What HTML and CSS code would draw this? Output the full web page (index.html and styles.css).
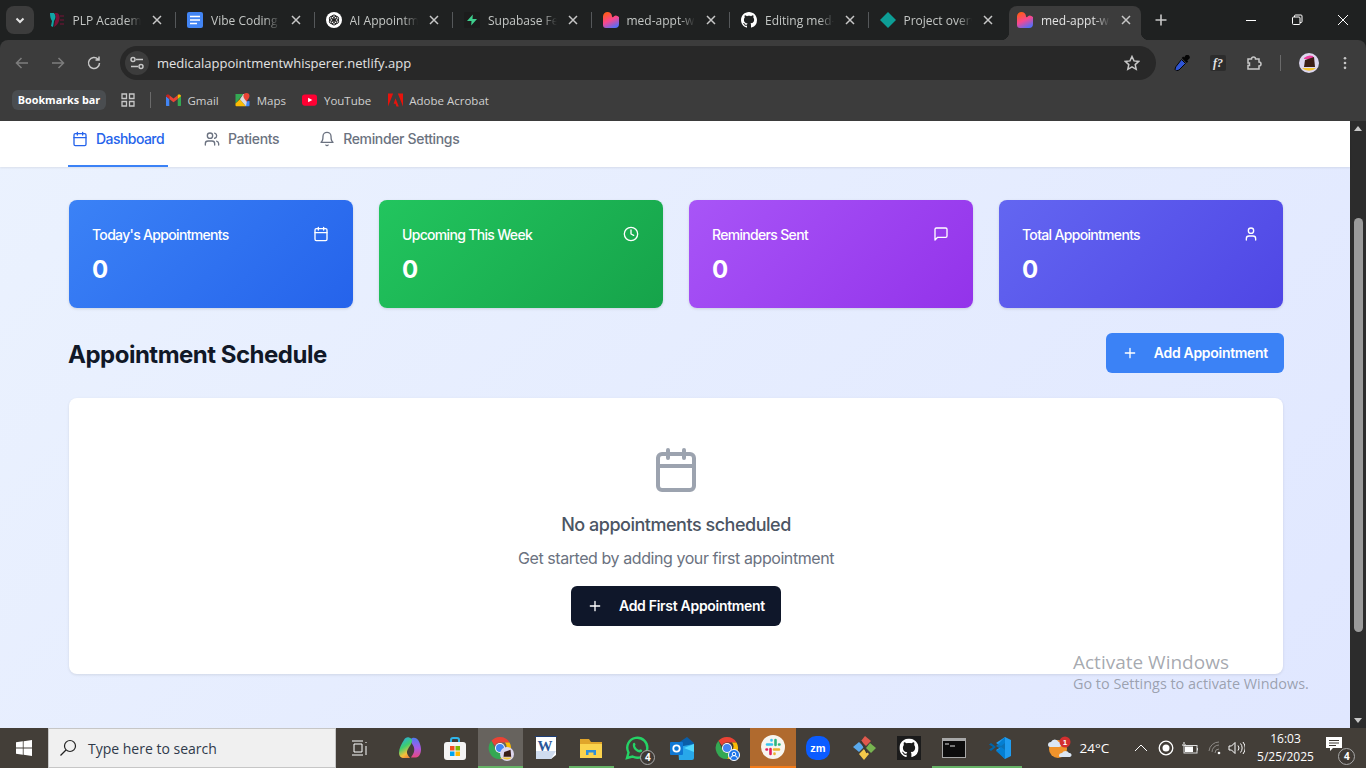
FILE: index.html
```html
<!DOCTYPE html>
<html lang="en">
<head>
<meta charset="UTF-8" />
<meta name="viewport" content="width=device-width, initial-scale=1" />
<title>Medical Appointment Whisperer</title>
<link rel="stylesheet" href="styles.css">
</head>
<body>

<svg class="defs" aria-hidden="true">
  <defs>
    <linearGradient id="heartFill" x1="0.1" y1="0" x2="0.6" y2="1">
      <stop offset="0.1" stop-color="#ff5a1f" />
      <stop offset="0.55" stop-color="#f8478f" />
      <stop offset="1" stop-color="#5a6cf5" />
    </linearGradient>
    <symbol id="i-calendar" viewBox="0 0 24 24"><rect x="3" y="4" width="18" height="18" rx="2" /><path d="M16 2v4M8 2v4M3 10h18" /></symbol>
    <symbol id="i-users" viewBox="0 0 24 24"><path d="M16 21v-2a4 4 0 0 0-4-4H6a4 4 0 0 0-4 4v2" /><circle cx="9" cy="7" r="4" /><path d="M22 21v-2a4 4 0 0 0-3-3.87M16 3.13a4 4 0 0 1 0 7.75" /></symbol>
    <symbol id="i-bell" viewBox="0 0 24 24"><path d="M6 8a6 6 0 0 1 12 0c0 7 3 9 3 9H3s3-2 3-9" /><path d="M10.3 21a1.94 1.94 0 0 0 3.4 0" /></symbol>
    <symbol id="i-clock" viewBox="0 0 24 24"><circle cx="12" cy="12" r="10" /><path d="M12 6v6l4 2" /></symbol>
    <symbol id="i-message" viewBox="0 0 24 24"><path d="M21 15a2 2 0 0 1-2 2H7l-4 4V5a2 2 0 0 1 2-2h14a2 2 0 0 1 2 2z" /></symbol>
    <symbol id="i-user" viewBox="0 0 24 24"><path d="M19 21v-2a4 4 0 0 0-4-4H9a4 4 0 0 0-4 4v2" /><circle cx="12" cy="7" r="4" /></symbol>
    <symbol id="i-plus" viewBox="0 0 24 24"><path d="M5 12h14M12 5v14" /></symbol>
    <symbol id="i-x" viewBox="0 0 14 14"><path d="M3 3l8 8M11 3l-8 8" /></symbol>
    <symbol id="i-heart" viewBox="0 0 16 16"><path fill="url(#heartFill)" d="M4.500 0A4.500 4.500 0 0 1 9 4.500c0 .5.4 1 1 .8A3.500 3.500 0 0 1 16 9v3a4 4 0 0 1-4 4H3a3 3 0 0 1-3-3V4.500A4.500 4.500 0 0 1 4.500 0z" /></symbol>
    <symbol id="i-github" viewBox="0 0 16 16"><path d="M8 0C3.58 0 0 3.58 0 8c0 3.54 2.290 6.530 5.470 7.590.4.07.55-.17.55-.38 0-.19-.01-.82-.01-1.490-2.010.37-2.530-.49-2.690-.94-.09-.23-.48-.94-.82-1.130-.28-.15-.68-.52-.01-.53.63-.01 1.080.58 1.230.82.72 1.210 1.870.87 2.330.66.07-.52.28-.87.51-1.070-1.780-.2-3.640-.89-3.640-3.950 0-.87.31-1.590.82-2.150-.08-.2-.36-1.020.08-2.120 0 0 .67-.21 2.200.82.64-.18 1.320-.27 2-.27s1.360.09 2 .27c1.530-1.040 2.200-.82 2.200-.82.44 1.100.16 1.920.08 2.120.51.56.82 1.270.82 2.150 0 3.070-1.870 3.750-3.650 3.950.29.25.54.73.54 1.480 0 1.070-.01 1.930-.01 2.200 0 .21.15.46.55.38A8.010 8.010 0 0 0 16 8c0-4.420-3.580-8-8-8z" /></symbol>
    <symbol id="i-chrome" viewBox="0 0 24 24">
      <path fill="#ea4335" d="M12 1a11 11 0 0 1 9.530 5.500H12a5.500 5.500 0 0 0-5 3.200L3.400 4.800A11 11 0 0 1 12 1z" />
      <path fill="#fbbc04" d="M21.530 6.500A11 11 0 0 1 12 23l4.700-8.300A5.500 5.500 0 0 0 16.800 6.500z" />
      <path fill="#34a853" d="M3.400 4.800L7.800 14.500a5.500 5.500 0 0 0 8.900.2L12 23A11 11 0 0 1 3.400 4.800z" />
      <circle cx="12" cy="12" r="5" fill="#fff" /><circle cx="12" cy="12" r="4" fill="#4285f4" />
    </symbol>
  </defs>
</svg>

<header class="chrome">
  <div class="tabstrip">
    <button class="tab-search"><svg width="12" height="12" viewBox="0 0 12 12" class="line"><path d="M2.500 4.500L6 8l3.500-3.500" /></svg></button>
    <div class="tab">
      <svg class="favicon" viewBox="0 0 16 16"><path fill="#11a5a5" d="M1 1h4c2 2 2 5 0 8l-1 6-2-1 1-5C1.500 7 1 4 1 1z" /><path fill="#7b1238" d="M5 1h3c3 1 3 5 2 8s-3 5-5 6l1-6c2-3 1-6-1-8z" /><path stroke="#7b1238" stroke-width="1.200" d="M11 4h4M11 8h4M11 12h4" /></svg>
      <span class="tab-title">PLP Academy</span>
      <svg class="tab-close line"><use href="#i-x" /></svg>
    </div>
    <div class="tab">
      <svg class="favicon" viewBox="0 0 16 16"><rect width="16" height="16" rx="2" fill="#4285f4" /><path stroke="#fff" stroke-width="1.700" d="M3 4.500h10M3 8h10M3 11.500h7" /></svg>
      <span class="tab-title">Vibe Coding</span>
      <svg class="tab-close line"><use href="#i-x" /></svg>
    </div>
    <div class="tab">
      <svg class="favicon" viewBox="0 0 16 16"><circle cx="8" cy="8" r="8" fill="#fff" /><g fill="none" stroke="#222" stroke-width="1"><circle cx="8" cy="5.500" r="2.500" /><circle cx="10.200" cy="6.800" r="2.500" /><circle cx="10.200" cy="9.200" r="2.500" /><circle cx="8" cy="10.500" r="2.500" /><circle cx="5.800" cy="9.200" r="2.500" /><circle cx="5.800" cy="6.800" r="2.500" /></g></svg>
      <span class="tab-title">AI Appointment</span>
      <svg class="tab-close line"><use href="#i-x" /></svg>
    </div>
    <div class="tab">
      <svg class="favicon" viewBox="0 0 16 16"><rect width="16" height="16" rx="1" fill="#1c1c1c" /><path fill="#3ecf8e" d="M8.800 2.500L3 9h4.500l-.3 4.500L13 7H8.500z" /></svg>
      <span class="tab-title">Supabase Features</span>
      <svg class="tab-close line"><use href="#i-x" /></svg>
    </div>
    <div class="tab">
      <svg class="favicon"><use href="#i-heart" /></svg>
      <span class="tab-title">med-appt-whisperer</span>
      <svg class="tab-close line"><use href="#i-x" /></svg>
    </div>
    <div class="tab">
      <svg class="favicon" fill="#fff"><use href="#i-github" /></svg>
      <span class="tab-title">Editing med-appt</span>
      <svg class="tab-close line"><use href="#i-x" /></svg>
    </div>
    <div class="tab no-sep">
      <svg class="favicon" viewBox="0 0 16 16"><path fill="#0d9e96" d="M8 0l8 8-8 8-8-8z" /></svg>
      <span class="tab-title">Project overview</span>
      <svg class="tab-close line"><use href="#i-x" /></svg>
    </div>
    <div class="tab active">
      <svg class="favicon"><use href="#i-heart" /></svg>
      <span class="tab-title">med-appt-whisperer</span>
      <svg class="tab-close line"><use href="#i-x" /></svg>
    </div>
    <svg class="new-tab line" viewBox="0 0 14 14"><path d="M7 1.500v11M1.500 7h11" /></svg>
    <div class="window-btns">
      <span class="window-btn"><svg width="12" height="12" viewBox="0 0 12 12" class="thin"><path d="M1 6.500h10" /></svg></span>
      <span class="window-btn"><svg width="12" height="12" viewBox="0 0 12 12" class="thin"><rect x="1.500" y="3" width="7.500" height="7.500" rx="1" /><path d="M3.500 3V2a1 1 0 0 1 1-1h5.500a1 1 0 0 1 1 1v5.500a1 1 0 0 1-1 1H9" /></svg></span>
      <span class="window-btn"><svg width="12" height="12" viewBox="0 0 12 12" class="thin"><path d="M1 1l10 10M11 1L1 11" /></svg></span>
    </div>
  </div>

  <div class="toolbar">
    <div class="nav-btns">
      <svg class="tool-icon dim" viewBox="0 0 16 16"><path d="M14 8H2.500M7.500 3l-5 5 5 5" /></svg>
      <svg class="tool-icon dim" viewBox="0 0 16 16"><path d="M2 8h11.500M8.500 3l5 5-5 5" /></svg>
      <svg class="tool-icon" viewBox="0 0 16 16"><path d="M13.500 8A5.500 5.500 0 1 1 12 4.200M13 1.500v3.500H9.500" /></svg>
    </div>
    <div class="omnibox">
      <span class="site-info"><svg width="14" height="14" viewBox="0 0 14 14" class="line"><path d="M6 3.500h7M1 10.500h7" /><circle cx="3" cy="3.500" r="2" /><circle cx="11" cy="10.500" r="2" /></svg></span>
      <span class="url">medicalappointmentwhisperer.netlify.app</span>
      <svg class="star line" viewBox="0 0 16 16"><path d="M8 1.500l2 4.400 4.800.5-3.600 3.200 1 4.700L8 11.900l-4.200 2.400 1-4.700L1.200 6.400 6 5.900z" /></svg>
    </div>
    <div class="extensions">
      <svg class="ext dropper" viewBox="0 0 16 16"><path fill="#050505" d="M11.500 0.500a2 2 0 0 1 3.500 3.500l-1.800 1.500 1 1-1.500 1.500-5-5 1.500-1.500 1 1z" /><path fill="#2f55d4" stroke="#050505" d="M7.500 4.500l4 4L5 15l-2.500.8-1.500-1.500.8-2.500z" /></svg>
      <span class="ext-font">f?</span>
      <svg class="ext line" viewBox="0 0 16 16"><path d="M2 4h3.500a2 2 0 0 1 4 0H13v3a2 2 0 0 1 0 4v3H2v-3.500h1.500V8H2z" /></svg>
      <span class="tool-sep"></span>
      <svg class="avatar" viewBox="0 0 20 20"><circle cx="10" cy="10" r="10" fill="#dcd6ee" /><path fill="#f4c430" d="M3 15h14a10 10 0 0 1-14 0z" /><path fill="#ee3fa0" d="M5 5a9 9 0 0 1 9-2l1 3H5z" /><path fill="#3a1d16" d="M5 14l1-7 9-3 1 10z" /></svg>
      <svg class="kebab" viewBox="0 0 4 16"><circle cx="2" cy="2.500" r="1.500" /><circle cx="2" cy="8" r="1.500" /><circle cx="2" cy="13.500" r="1.500" /></svg>
    </div>
  </div>

  <div class="bookmarks">
    <span class="bm-label">Bookmarks bar</span>
    <svg class="bm-apps" viewBox="0 0 14 14"><path d="M1 1h4.500v4.500H1zM8.500 1H13v4.500H8.500zM1 8.500h4.500V13H1zM8.500 8.500H13V13H8.500z" /></svg>
    <span class="bm-sep"></span>
    <span class="bm"><svg class="bm-icon" viewBox="0 0 16 14"><path fill="#4285f4" d="M0 3v9.500A1 1 0 0 0 1 13.500h2.500V6z" /><path fill="#34a853" d="M16 3v9.500a1 1 0 0 1-1 1h-2.500V6z" /><path fill="#ea4335" d="M3.500 6V2L8 5.500 12.500 2v4L8 9.500z" /><path fill="#c5221f" d="M0 3c0-2 2-2.500 3.500-1.500V6z" /><path fill="#fbbc04" d="M16 3c0-2-2-2.500-3.500-1.500V6z" /></svg>Gmail</span>
    <span class="bm"><svg class="bm-icon" viewBox="0 0 16 16"><path fill="#34a853" d="M0 1h9L0 12z" /><path fill="#fbbc04" d="M0 12l5-5 7 8H1a1 1 0 0 1-1-1z" /><path fill="#4285f4" d="M9 10l3 5h3a1 1 0 0 0 1-1V9z" /><path fill="#dcdcdc" d="M5 7L9 1h1l3 8-1 6z" /><path fill="#ea4335" d="M12.500 0A3.500 3.500 0 0 1 16 3.500C16 6 13.500 8 12.500 10 11.500 8 9 6 9 3.500A3.500 3.500 0 0 1 12.500 0z" /></svg>Maps</span>
    <span class="bm"><svg class="bm-icon" viewBox="0 0 16 12"><rect width="16" height="12" rx="3" fill="#ff0033" /><path fill="#fff" d="M6.500 3.500L11 6l-4.500 2.500z" /></svg>YouTube</span>
    <span class="bm"><svg class="bm-icon" viewBox="0 0 16 14"><path fill="#e8130c" d="M0 0h5.500L0 14zM16 0h-5.500L16 14zM8 5l3.500 9H9L8 11H6z" /></svg>Adobe Acrobat</span>
  </div>
</header>

<div class="viewport">
  <div class="page">
    <nav class="app-nav">
      <a class="nav-link current"><svg class="icon-16"><use href="#i-calendar" /></svg>Dashboard</a>
      <a class="nav-link"><svg class="icon-16"><use href="#i-users" /></svg>Patients</a>
      <a class="nav-link"><svg class="icon-16"><use href="#i-bell" /></svg>Reminder Settings</a>
    </nav>

    <main class="content">
      <section class="stats">
        <div class="stat blue">
          <div class="stat-top"><span>Today's Appointments</span><svg class="icon-16"><use href="#i-calendar" /></svg></div>
          <div class="stat-num">0</div>
        </div>
        <div class="stat green">
          <div class="stat-top"><span>Upcoming This Week</span><svg class="icon-16"><use href="#i-clock" /></svg></div>
          <div class="stat-num">0</div>
        </div>
        <div class="stat purple">
          <div class="stat-top"><span>Reminders Sent</span><svg class="icon-16"><use href="#i-message" /></svg></div>
          <div class="stat-num">0</div>
        </div>
        <div class="stat indigo">
          <div class="stat-top"><span>Total Appointments</span><svg class="icon-16"><use href="#i-user" /></svg></div>
          <div class="stat-num">0</div>
        </div>
      </section>

      <div class="schedule-head">
        <h2>Appointment Schedule</h2>
        <button class="btn btn-blue"><svg class="icon-16"><use href="#i-plus" /></svg>Add Appointment</button>
      </div>

      <section class="empty">
        <svg class="empty-icon"><use href="#i-calendar" /></svg>
        <h3>No appointments scheduled</h3>
        <p>Get started by adding your first appointment</p>
        <button class="btn btn-dark"><svg class="icon-16"><use href="#i-plus" /></svg>Add First Appointment</button>
      </section>
    </main>

    <div class="activate">
      <div class="activate-title">Activate Windows</div>
      <div class="activate-sub">Go to Settings to activate Windows.</div>
    </div>
  </div>

  <div class="scrollbar">
    <svg class="sb-arrow" viewBox="0 0 8 5"><path d="M4 0l4 5H0z" /></svg>
    <div class="sb-thumb"></div>
    <svg class="sb-arrow" viewBox="0 0 8 5"><path d="M4 5l4-5H0z" /></svg>
  </div>
</div>

<footer class="taskbar">
  <span class="start"><svg width="16" height="16" viewBox="0 0 16 16" fill="#fff"><path d="M0 2.300l6.800-1v6.300H0zM7.600 1.200L16 0v7.600H7.600zM0 8.400h6.800v6.300l-6.800-1zM7.600 8.400H16V16l-8.400-1.200z" /></svg></span>
  <div class="search">
    <svg width="18" height="18" viewBox="0 0 18 18" class="search-glass"><circle cx="11" cy="7" r="5.500" /><path d="M7 11l-5.500 5.500" /></svg>
    Type here to search
  </div>
  <span class="task-view"><svg width="18" height="16" viewBox="0 0 18 16" class="thin"><path d="M1 1h11M1 15h11M3 4h8v8H3zM15 2v1M15 6v9" /></svg></span>

  <span class="app"><svg width="24" height="24" viewBox="0 0 24 24"><defs><linearGradient id="cop" x1="0.2" y1="0" x2="0.6" y2="1"><stop offset="0" stop-color="#2aa7ee" /><stop offset="0.45" stop-color="#3ccf6e" /><stop offset="0.8" stop-color="#f5c13a" /><stop offset="1" stop-color="#f08a3a" /></linearGradient><linearGradient id="cop2" x1="0.5" y1="0" x2="0.5" y2="1"><stop offset="0" stop-color="#4f7bf0" /><stop offset="0.5" stop-color="#a65be8" /><stop offset="1" stop-color="#e8487f" /></linearGradient></defs><path fill="url(#cop2)" d="M13 3c1-1.500 4-1.500 5.500-.5 2.500 1.500 4.500 7 4.500 11 0 4-2 8-5 8h-5c2-3 4-6 3-10-.5-3-4-5-3-8.500z" /><path fill="url(#cop)" d="M6 4C7 2 9 1 11 1.500c2 .5 3 1.500 3 3 0 4-4 7-5 11-.5 2 1 4 3 6.500H6c-3 0-5-2-5-5C1 12 3.500 8 6 4z" /></svg></span>
  <span class="app"><svg width="24" height="24" viewBox="0 0 24 24"><path fill="none" stroke="#2fb4e9" stroke-width="2" d="M8 7V4a2 2 0 0 1 2-2h4a2 2 0 0 1 2 2v3" /><rect x="1" y="6" width="22" height="18" rx="3" fill="#f4f4f4" /><path fill="#f25022" d="M7 10h4.500v4.500H7z" /><path fill="#7fba00" d="M12.500 10H17v4.500h-4.500z" /><path fill="#00a4ef" d="M7 15.500h4.500V20H7z" /><path fill="#ffb900" d="M12.500 15.500H17V20h-4.500z" /></svg></span>
  <span class="app running focused"><svg width="24" height="24"><use href="#i-chrome" /></svg><svg class="badge-avatar" viewBox="0 0 20 20"><circle cx="10" cy="10" r="10" fill="#dcd6ee" /><path fill="#f4c430" d="M3 15h14a10 10 0 0 1-14 0z" /><path fill="#3a1d16" d="M5 14l1-7 9-3 1 10z" /></svg></span>
  <span class="app"><svg width="24" height="24" viewBox="0 0 24 24"><path fill="#fff" d="M2 1h20v18l-5 4H2z" /><path fill="#cfdcef" d="M2 15h20l-5 8H2z" /><text x="11" y="15" class="word-w">W</text><path fill="#1e3f78" d="M1 0h22v1H1z" /></svg></span>
  <span class="app running"><svg width="24" height="24" viewBox="0 0 24 24"><path fill="#e0a52b" d="M1 3h9l2 3h11v5H1z" /><path fill="#fbd34d" d="M1 8h22v14H1z" /><path fill="#2f8fd8" d="M7 19v-5h10v5h-2.500v-2.500h-5V19z" /></svg></span>
  <span class="app"><svg width="24" height="24" viewBox="0 0 24 24"><path fill="none" stroke="#25d366" stroke-width="2.400" d="M2 22l1.500-5.500A10 10 0 1 1 7.500 20.500z" /><path fill="#25d366" d="M8 7.500c1-1.500 2-1 2.500 1L10 10c1 2 2 3 4 4l1.500-.8c2 .8 2.300 1.500 1 2.800-3 2-10-3-8.500-8.500z" /></svg><span class="count">4</span></span>
  <span class="app"><svg width="24" height="24" viewBox="0 0 24 24"><path fill="#0a5ea8" d="M8 7l9-6 7 6v2L14 13z" /><path fill="#28a8ea" d="M8 11l16-3v14a2 2 0 0 1-2 2H9z" /><path fill="#50d9ff" d="M24 8v8l-10-4z" /><rect y="6" width="13" height="13" rx="1" fill="#0f78d4" /><circle cx="6.500" cy="12.500" r="3.200" fill="none" stroke="#fff" stroke-width="1.800" /></svg></span>
  <span class="app"><svg width="24" height="24"><use href="#i-chrome" /></svg><svg class="badge-profile" viewBox="0 0 12 12"><circle cx="6" cy="6" r="5.500" fill="#1a73e8" stroke="#fff" /><circle cx="6" cy="5" r="1.800" fill="none" stroke="#fff" /><path d="M2.500 10a3.500 3.500 0 0 1 7 0" fill="none" stroke="#fff" /></svg></span>
  <span class="app slack"><svg width="24" height="24" viewBox="0 0 24 24"><circle cx="12" cy="12" r="12" fill="#f7f5f0" /><g stroke-width="2.600" stroke-linecap="round" fill="none"><path stroke="#36c5f0" d="M6 9.500h5M10.500 5v.5" /><path stroke="#2eb67d" d="M14.500 5v5M18.500 9.500H18" /><path stroke="#ecb22e" d="M18 14.500h-5M13.500 19v-.5" /><path stroke="#e01e5a" d="M9.500 19v-5M5.500 14.500H6" /></g></svg></span>
  <span class="app"><svg width="24" height="24" viewBox="0 0 24 24"><rect width="24" height="24" rx="10" fill="#0b5cff" /><text x="12" y="16" class="zoom-text">zm</text></svg></span>
  <span class="app"><svg width="24" height="24" viewBox="0 0 24 24"><path fill="#5aa9ec" d="M7 6l5 5-5 5-6-5z" /><path fill="#e0594d" d="M13 0l6 5-5 5-5-5z" /><path fill="#78b450" d="M18 7l6 5-5 5-5-5z" /><path fill="#f4c84a" d="M12 13l5 5-5 6-5-6z" /><path stroke="#3b3633" stroke-width="1.500" d="M9 5l6 12" /></svg></span>
  <span class="app"><svg class="gh-tile" width="24" height="24" viewBox="-2 -2 20 20" fill="#fff"><rect x="-2" y="-2" width="20" height="20" fill="#1b1b1b" /><use href="#i-github" width="16" height="16" /></svg></span>
  <span class="app running"><svg width="24" height="20" viewBox="0 0 24 20"><rect width="24" height="20" fill="#a8a8a8" /><rect x="1" y="3" width="22" height="16" fill="#0c0c0c" /><path stroke="#ddd" d="M3 6h4M8 8h5" /></svg></span>
  <span class="app running"><svg width="24" height="24" viewBox="0 0 24 24"><path fill="#0065a9" d="M1 8.500l2-1.500 5 4-5 4-2-1.500L5 11z" /><path fill="#1f9cf0" d="M17 1l6 3v16l-6 3-9-9 5-3 4 3V7l-4 3-5-3z" /><path fill="#007acc" d="M17 1l-9 9-5-3 9 5.500L8 15l9 8z" opacity=".85" /></svg></span>

  <div class="tray">
    <span class="weather"><svg width="26" height="24" viewBox="0 0 26 24"><circle cx="11" cy="13" r="9" fill="#f0932b" /><path fill="#dbe7f5" d="M1 9a3 3 0 0 1 3-3 4 4 0 0 1 7.500 0A2.500 2.500 0 0 1 12 11H3a2 2 0 0 1-2-2zM12 20a3 3 0 0 1 3-3 4 4 0 0 1 7 0 2 2 0 0 1 1 4H13a1.500 1.500 0 0 1-1-1z" /><circle cx="18" cy="6" r="5.500" fill="#d32f2f" /><text x="18" y="9" class="weather-num">1</text></svg></span>
    <span class="temp">24°C</span>
    <svg class="tray-caret thin" width="14" height="8" viewBox="0 0 14 8"><path d="M1 7l6-6 6 6" /></svg>
    <svg class="tray-rec" width="16" height="16" viewBox="0 0 16 16"><circle cx="8" cy="8" r="6.800" fill="none" stroke="#fff" stroke-width="1.300" /><circle cx="8" cy="8" r="3.500" fill="#fff" /></svg>
    <svg class="tray-batt" width="18" height="12" viewBox="0 0 18 12"><path d="M1 3h4M3 0v2" stroke="#fff" /><rect x="3" y="3.500" width="13" height="7.500" fill="none" stroke="#ddd" /><rect x="4" y="4.500" width="8" height="5.500" fill="#fff" /><path d="M16.500 6v2.500" stroke="#ddd" /></svg>
    <svg class="tray-wifi" width="16" height="14" viewBox="0 0 16 14" fill="none" stroke="#8f8c88"><path d="M1 10a10 10 0 0 1 10-9M4 11a7 7 0 0 1 7-7M7 12a4 4 0 0 1 4-4" /><circle cx="11" cy="12" r="1.300" fill="#fff" stroke="none" /></svg>
    <svg class="tray-vol thin" width="17" height="14" viewBox="0 0 17 14"><path d="M1 5h2.500L7 1.500v11L3.500 9H1zM10 4.500a4 4 0 0 1 0 5M12.500 2.500a7 7 0 0 1 0 9M15 1a10 10 0 0 1 0 12" /></svg>
    <div class="clock"><span>16:03</span><span>5/25/2025</span></div>
    <span class="notify"><svg width="16" height="15" viewBox="0 0 16 15"><path fill="#fff" d="M0 0h16v11H7l-3 3v-3H0z" /><path stroke="#3f3a35" d="M3 3.500h10M3 6h10M3 8.500h7" /></svg><span class="count">4</span></span>
  </div>
</footer>

</body>
</html>
```

FILE: styles.css
```css
html, body {
  margin: 0;
  height: 768px;
  overflow: hidden;
}
body {
  display: flex;
  flex-direction: column;
  font-family: "Open Sans", "Noto Sans", sans-serif;
}
.defs {
  display: block;
  width: 0;
  height: 0;
}
.line {
  fill: none;
  stroke: #c7c7c7;
  stroke-width: 1.500;
}
.thin {
  fill: none;
  stroke: #fff;
  stroke-width: 1;
}

/* browser frame */
.chrome {
  background: #1f2121;
  color: #e3e3e3;
  flex: none;
}
.tabstrip {
  display: flex;
  align-items: flex-end;
  height: 40px;
}
.tab-search {
  width: 28px;
  height: 28px;
  margin: 0 3.500px 6px 6px;
  display: flex;
  align-items: center;
  justify-content: center;
  padding: 0;
  border: none;
  border-radius: 8px;
  background: #3c3c3c;
}
.tab-search .line {
  stroke: #e3e3e3;
  stroke-width: 2;
}
.tab {
  position: relative;
  display: flex;
  align-items: center;
  width: 138.500px;
  height: 34px;
  box-sizing: border-box;
  padding: 0 11.500px 6px 11px;
  font-size: 12px;
  color: #c4c7c5;
}
.tab::after {
  content: "";
  position: absolute;
  right: 0;
  top: 6px;
  width: 1px;
  height: 16px;
  background: #55585a;
}
.tab.no-sep {
  width: 137.500px;
}
.tab.no-sep::after {
  display: none;
}
.tab.active {
  width: 132px;
  margin-left: 3px;
  padding: 0 9px 6px 8px;
  background: #3c3c3c;
  border-radius: 8px 8px 0 0;
  color: #e3e3e3;
}
.tab.active::before,
.tab.active::after {
  content: "";
  position: absolute;
  top: auto;
  bottom: 0;
  width: 8px;
  height: 8px;
}
.tab.active::before {
  left: -8px;
  background: radial-gradient(circle at 0 0, transparent 8px, #3c3c3c 8.500px);
}
.tab.active::after {
  right: -8px;
  background: radial-gradient(circle at 100% 0, transparent 8px, #3c3c3c 8.500px);
}
.favicon {
  width: 16px;
  height: 16px;
  flex: none;
}
.tab-title {
  width: 68.500px;
  margin: 0 9px 0 8px;
  flex: none;
  overflow: hidden;
  white-space: nowrap;
  -webkit-mask-image: linear-gradient(to right, #000 78%, transparent 100%);
  mask-image: linear-gradient(to right, #000 78%, transparent 100%);
}
.tab-close {
  width: 14px;
  height: 14px;
  flex: none;
}
.new-tab {
  width: 14px;
  height: 14px;
  margin: 0 0 13px 13px;
  flex: none;
  stroke-width: 1.600;
}
.window-btns {
  display: flex;
  margin-left: auto;
  height: 40px;
}
.window-btn {
  width: 46px;
  display: flex;
  align-items: center;
  justify-content: center;
}

.toolbar {
  display: flex;
  align-items: flex-start;
  height: 40px;
  background: #3c3c3c;
  border-radius: 8px 8px 0 0;
}
.nav-btns {
  display: flex;
  width: 120px;
  padding: 15px 0 0 14px;
  box-sizing: border-box;
  gap: 20px;
}
.tool-icon {
  width: 16px;
  height: 16px;
  fill: none;
  stroke: #c7c7c7;
  stroke-width: 1.500;
}
.tool-icon.dim {
  stroke: #7d7d7d;
}
.omnibox {
  display: flex;
  align-items: center;
  width: 1036px;
  height: 34px;
  margin-top: 6px;
  background: #282828;
  border-radius: 17px;
}
.site-info {
  width: 24px;
  height: 24px;
  margin-left: 5px;
  display: flex;
  align-items: center;
  justify-content: center;
  background: #3c3c3c;
  border-radius: 50%;
  flex: none;
}
.url {
  margin-left: 8px;
  font-size: 13px;
  color: #e3e3e3;
}
.star {
  width: 16px;
  height: 16px;
  margin-left: auto;
  margin-right: 16px;
}
.extensions {
  display: flex;
  align-items: center;
  height: 34px;
  margin-top: 6px;
  padding-left: 18px;
}
.ext {
  width: 16px;
  height: 16px;
  flex: none;
}
.ext-font {
  width: 16px;
  height: 16px;
  margin-left: 20px;
  margin-right: 20px;
  background: #2c2c2c;
  border-radius: 2px;
  font: italic bold 12px/16px "Liberation Serif", serif;
  color: #e3e3e3;
  text-align: center;
}
.tool-sep {
  width: 1px;
  height: 16px;
  margin: 0 18px;
  background: #6a6a6a;
}
.avatar {
  width: 20px;
  height: 20px;
  flex: none;
}
.kebab {
  width: 4px;
  height: 14px;
  margin-left: 24px;
  fill: #c7c7c7;
}

.bookmarks {
  display: flex;
  align-items: center;
  height: 41px;
  box-sizing: border-box;
  padding: 0 0 1px 12px;
  background: #3c3c3c;
  font-size: 11.500px;
  color: #d0d0d0;
}
.bm-label {
  width: 94px;
  height: 20px;
  line-height: 20px;
  text-align: center;
  background: #4a4d50;
  border-radius: 6px;
  font-weight: 700;
  font-size: 10.800px;
  color: #fff;
}
.bm-apps {
  width: 14px;
  height: 14px;
  margin-left: 15px;
  fill: none;
  stroke: #c7c7c7;
  stroke-width: 1.300;
}
.bm-sep {
  width: 1px;
  height: 16px;
  margin: 0 15px;
  background: #6a6a6a;
}
.bm {
  display: flex;
  align-items: center;
  gap: 6.500px;
  margin-right: 16.500px;
}
.bm-icon {
  width: 15px;
  height: 14px;
  flex: none;
}

/* app page */
.viewport {
  display: flex;
  height: 607px;
  flex: none;
}
.page {
  position: relative;
  width: 1350px;
  background: linear-gradient(135deg, #ebf2fe, #e0e7ff);
  font-family: Inter, "Liberation Sans", sans-serif;
}
.app-nav {
  display: flex;
  gap: 32px;
  height: 46px;
  padding: 0 68px;
  background: #fff;
  box-shadow: 0 1px 2px rgba(0, 0, 0, 0.08);
}
.nav-link {
  display: flex;
  align-items: center;
  gap: 8px;
  height: 35px;
  padding: 0 4px;
  font-size: 14px;
  font-weight: 500;
  letter-spacing: -0.35px;
  color: #6b7280;
}
.nav-link.current {
  box-sizing: border-box;
  width: 100px;
  height: 46px;
  padding-bottom: 9px;
  border-bottom: 2px solid #3b82f6;
  letter-spacing: -0.55px;
  color: #2563eb;
}
.icon-16 {
  width: 16px;
  height: 16px;
  flex: none;
  fill: none;
  stroke: currentColor;
  stroke-width: 2;
  stroke-linecap: round;
  stroke-linejoin: round;
}
.content {
  padding: 33px 66px 0 68px;
}
.stats {
  display: grid;
  grid-template-columns: repeat(4, 284px);
  gap: 26px;
  margin: 0 1px;
}
.stat {
  height: 108px;
  box-sizing: border-box;
  padding: 24px 24px 24px 23px;
  border-radius: 8px;
  color: #fff;
  box-shadow: 0 1px 3px rgba(0, 0, 0, 0.12);
}
.blue { background: linear-gradient(135deg, #3b82f6, #2563eb); }
.green { background: linear-gradient(135deg, #22c55e, #16a34a); }
.purple { background: linear-gradient(135deg, #a855f7, #9333ea); }
.indigo { background: linear-gradient(135deg, #6366f1, #4f46e5); }
.stat-top {
  display: flex;
  justify-content: space-between;
  align-items: center;
  height: 20px;
  font-size: 14px;
  font-weight: 500;
  letter-spacing: -0.68px;
}
.stat-num {
  margin-top: 10px;
  font-size: 24px;
  line-height: 32px;
  font-weight: 700;
}
.schedule-head {
  display: flex;
  justify-content: space-between;
  align-items: center;
  height: 40px;
  margin-top: 25px;
}
.schedule-head h2 {
  margin: 2px 0 0;
  font-size: 24px;
  font-weight: 700;
  letter-spacing: -0.5px;
  color: #111827;
}
.btn {
  display: flex;
  align-items: center;
  gap: 16px;
  height: 40px;
  padding: 0 16px 1px 16px;
  border: none;
  border-radius: 6px;
  font-family: inherit;
  font-size: 14px;
  font-weight: 600;
  letter-spacing: -0.3px;
  color: #fff;
}
.btn-blue {
  background: #3b82f6;
}
.btn-dark {
  background: #0f172a;
}
.empty {
  display: flex;
  flex-direction: column;
  align-items: center;
  height: 276px;
  box-sizing: border-box;
  margin: 25px 1px 0;
  padding-top: 48px;
  background: #fff;
  border-radius: 8px;
  box-shadow: 0 1px 3px rgba(0, 0, 0, 0.1);
}
.empty-icon {
  width: 48px;
  height: 48px;
  fill: none;
  stroke: #9ca3af;
  stroke-width: 2;
  stroke-linecap: round;
  stroke-linejoin: round;
}
.empty h3 {
  margin: 17px 0 0;
  font-size: 18px;
  line-height: 28px;
  font-weight: 500;
  letter-spacing: -0.48px;
  color: #4b5563;
}
.empty p {
  margin: 7px 0 0;
  font-size: 16px;
  line-height: 24px;
  letter-spacing: -0.43px;
  color: #6b7280;
}
.empty .btn {
  margin-top: 16px;
}
.activate {
  position: absolute;
  left: 1073px;
  top: 529px;
  font-family: "Open Sans", sans-serif;
  color: rgba(110, 115, 125, 0.62);
}
.activate-title {
  font-size: 19px;
  line-height: 24px;
}
.activate-sub {
  font-size: 14.400px;
  line-height: 20px;
}
.scrollbar {
  display: flex;
  flex-direction: column;
  align-items: center;
  width: 16px;
  background: #2c2c2c;
}
.sb-arrow {
  width: 8px;
  height: 5px;
  margin: 5px 0;
  fill: #c8c8c8;
  flex: none;
}
.sb-thumb {
  width: 9px;
  height: 414px;
  margin-top: 82px;
  margin-bottom: auto;
  background: #9b9b9b;
  border-radius: 5px;
}

/* windows taskbar */
.taskbar {
  display: flex;
  align-items: center;
  height: 40px;
  flex: none;
  background: #433e38;
  color: #fff;
}
.start {
  width: 48px;
  display: flex;
  justify-content: center;
}
.search {
  display: flex;
  align-items: center;
  gap: 11px;
  width: 288px;
  height: 40px;
  box-sizing: border-box;
  padding-left: 10px;
  background: #f0f0f0;
  border: 1px solid #c6c6c6;
  font-size: 14px;
  color: #2f3a4a;
}
.search-glass {
  fill: none;
  stroke: #222;
  stroke-width: 1.200;
}
.task-view {
  width: 51px;
  display: flex;
  justify-content: center;
  margin-left: -2px;
  padding-right: 2px;
}
.app {
  position: relative;
  width: 45.400px;
  height: 40px;
  box-sizing: border-box;
  display: flex;
  align-items: center;
  justify-content: center;
  flex: none;
}
.app.running::after {
  content: "";
  position: absolute;
  left: 0;
  right: 0;
  bottom: 0;
  height: 2px;
  background: #66b366;
}
.app.focused {
  background: #67635e;
}
.app.slack {
  background: #b06a2e;
  border-bottom: 2px solid #f07a1a;
}
.badge-avatar {
  position: absolute;
  right: 9px;
  bottom: 7px;
  width: 14px;
  height: 14px;
}
.badge-profile {
  position: absolute;
  right: 10px;
  bottom: 7px;
  width: 12px;
  height: 12px;
}
.word-w {
  font: 700 15px "Liberation Serif", serif;
  fill: #2b579a;
  text-anchor: middle;
}
.zoom-text {
  font: 700 11px "Liberation Sans", sans-serif;
  fill: #fff;
  text-anchor: middle;
}
.weather-num {
  font: 700 8px "Liberation Sans", sans-serif;
  fill: #fff;
  text-anchor: middle;
}
.count {
  position: absolute;
  right: 4px;
  bottom: 3px;
  width: 15px;
  height: 15px;
  box-sizing: border-box;
  border: 1px solid #aaa;
  border-radius: 50%;
  background: #3f3a35;
  font: 700 10px/13px "Noto Sans", sans-serif;
  text-align: center;
  color: #fff;
}
.tray {
  display: flex;
  align-items: center;
  height: 40px;
  flex: 1;
  padding-left: 25px;
  font-size: 13px;
}
.weather {
  display: flex;
  width: 32px;
  flex: none;
}
.temp {
  width: 47px;
  flex: none;
  font-size: 13.500px;
}
.tray-caret {
  margin-left: 8px;
  flex: none;
}
.tray-rec {
  margin-left: 10px;
  flex: none;
}
.tray-batt {
  margin-left: 7px;
  flex: none;
}
.tray-wifi {
  margin-left: 9px;
  flex: none;
}
.tray-vol {
  margin-left: 4px;
  flex: none;
}
.clock {
  display: flex;
  flex-direction: column;
  align-items: center;
  width: 60px;
  margin-left: 10px;
  font-size: 12px;
  line-height: 18px;
  flex: none;
}
.notify {
  position: relative;
  display: flex;
  width: 18px;
  margin-left: 11px;
  margin-bottom: 8px;
  flex: none;
}
.notify .count {
  right: -11px;
  bottom: -13px;
  width: 17px;
  height: 17px;
  line-height: 15px;
}
```
